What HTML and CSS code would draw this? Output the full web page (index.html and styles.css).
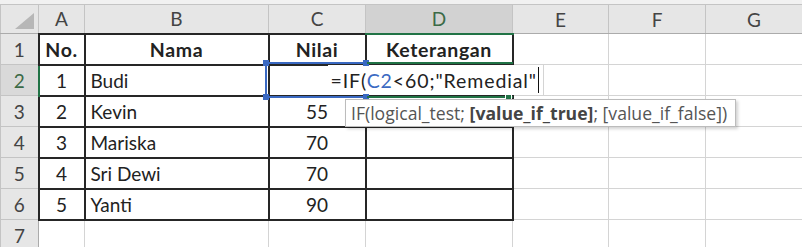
FILE: index.html
```html
<!DOCTYPE html>
<html lang="id">
<head>
    <meta charset="UTF-8">
    <title>Rumus IF</title>
    <link rel="stylesheet" href="styles.css">
</head>
<body>
    <div class="sheet">
        <table class="grid">
            <colgroup>
                <col class="w-hdr">
                <col class="w-a">
                <col class="w-b">
                <col class="w-c">
                <col class="w-d">
                <col class="w-e">
                <col class="w-f">
                <col class="w-g">
            </colgroup>
            <thead>
                <tr>
                    <th class="corner"><span class="tri"></span></th>
                    <th>A</th>
                    <th>B</th>
                    <th>C</th>
                    <th class="col-active">D</th>
                    <th>E</th>
                    <th>F</th>
                    <th>G</th>
                </tr>
            </thead>
            <tbody>
                <tr>
                    <th class="rh">1</th>
                    <td class="t mid bold">No.</td>
                    <td class="t mid bold">Nama</td>
                    <td class="t mid bold">Nilai</td>
                    <td class="t mid bold">Keterangan</td>
                    <td></td><td></td><td></td>
                </tr>
                <tr>
                    <th class="rh row-active">2</th>
                    <td class="t mid">1</td>
                    <td class="t">Budi</td>
                    <td class="t"></td>
                    <td class="t"></td>
                    <td></td><td></td><td></td>
                </tr>
                <tr>
                    <th class="rh">3</th>
                    <td class="t mid">2</td>
                    <td class="t">Kevin</td>
                    <td class="t mid">55</td>
                    <td class="t"></td>
                    <td></td><td></td><td></td>
                </tr>
                <tr>
                    <th class="rh">4</th>
                    <td class="t mid">3</td>
                    <td class="t">Mariska</td>
                    <td class="t mid">70</td>
                    <td class="t"></td>
                    <td></td><td></td><td></td>
                </tr>
                <tr>
                    <th class="rh">5</th>
                    <td class="t mid">4</td>
                    <td class="t">Sri Dewi</td>
                    <td class="t mid">70</td>
                    <td class="t"></td>
                    <td></td><td></td><td></td>
                </tr>
                <tr>
                    <th class="rh">6</th>
                    <td class="t mid">5</td>
                    <td class="t">Yanti</td>
                    <td class="t mid">90</td>
                    <td class="t"></td>
                    <td></td><td></td><td></td>
                </tr>
                <tr>
                    <th class="rh">7</th>
                    <td></td><td></td><td></td><td></td>
                    <td></td><td></td><td></td>
                </tr>
            </tbody>
        </table>

        <!-- cell being edited (D2), text spills over its neighbours -->
        <div class="editor">
            <span class="formula">=IF(<span class="ref">C2</span>&lt;60;"Remedial"</span><span class="caret"></span>
        </div>

        <!-- range referenced by the formula -->
        <div class="ref-box">
            <span class="knob tl"></span>
            <span class="knob tr"></span>
            <span class="knob bl"></span>
            <span class="knob br"></span>
        </div>

        <div class="active-cell"><span class="fill-handle"></span></div>

        <div class="tip">IF(logical_test; <b>[value_if_true]</b>; [value_if_false])</div>
    </div>
</body>
</html>
```

FILE: styles.css
```css
* {
    margin: 0;
    padding: 0;
    box-sizing: border-box;
}

body {
    background: #fff;
    font-family: 'Lato', 'Open Sans', sans-serif;
    overflow: hidden;
}

.sheet {
    position: relative;
    width: 802px;
    height: 247px;
    padding-top: 4px;
    background: linear-gradient(#f1f1f1 0 4px, #fff 4px);
}

.grid {
    border-collapse: collapse;
    table-layout: fixed;
    width: 802px;
    font-size: 19px;
    color: #222;
}

.w-hdr { width: 38px; }
.w-a { width: 46px; }
.w-b { width: 184px; }
.w-c { width: 97px; }
.w-d { width: 147px; }
.w-e { width: 96px; }
.w-f { width: 97px; }
.w-g { width: 97px; }

.grid th,
.grid td {
    border: 1px solid #d4d4d4;
    height: 31px;
    padding: 0 5px;
    white-space: nowrap;
    overflow: hidden;
    text-align: left;
}

/* column and row headers */
.grid thead th {
    height: 29px;
    background: #e6e6e6;
    border-color: #c4c4c4;
    border-bottom-color: #ababab;
    color: #444;
    font-weight: normal;
    text-align: center;
}

.grid .rh {
    background: #e6e6e6;
    border-color: #c4c4c4;
    border-right-color: #ababab;
    color: #444;
    font-weight: normal;
    text-align: center;
}

.grid thead .col-active {
    background: #d2d2d2;
    color: #3b6a47;
    border-bottom: 2px solid #217346;
}

.grid .row-active {
    background: #d9d9d9;
    color: #3b6a47;
    border-right: 2px solid #217346;
}

.corner {
    position: relative;
}

.tri {
    position: absolute;
    right: 4px;
    bottom: 4px;
    width: 19px;
    height: 16px;
    background: #b7b7b7;
    clip-path: polygon(100% 0, 100% 100%, 0 100%);
}

/* bordered data range */
.grid td.t {
    border: 2px solid #262626;
}

.mid {
    text-align: center !important;
}

.bold {
    font-weight: bold;
    font-size: 19.5px;
    letter-spacing: 0.6px;
}

/* right-aligned edit box, the formula overflows to the left */
.editor {
    position: absolute;
    left: 328px;
    top: 65px;
    width: 216px;
    height: 30px;
    display: flex;
    justify-content: flex-end;
    align-items: center;
    background: #fff;
    border-right: 1px solid #d4d4d4;
    padding-right: 4px;
    font-size: 19.5px;
    color: #222;
    white-space: nowrap;
}

.formula {
    flex-shrink: 0;
    letter-spacing: 0.9px;
}

.formula .ref {
    color: #3a69c2;
}

.caret {
    flex-shrink: 0;
    width: 1px;
    height: 26px;
    margin-left: 1px;
    background: #111;
}

/* outline only, so the formula text stays readable */
.ref-box {
    position: absolute;
    left: 265px;
    top: 62px;
    width: 101px;
    height: 36px;
    border-top: 2px solid #3a69c2;
    border-bottom: 2px solid #3a69c2;
    border-left: 2px solid #3a69c2;
}

.knob {
    position: absolute;
    width: 6px;
    height: 6px;
    background: #3a69c2;
}

.knob.tl { left: -4px; top: -4px; }
.knob.tr { right: -3px; top: -4px; }
.knob.bl { left: -4px; bottom: -4px; }
.knob.br { right: -3px; bottom: -4px; }

.active-cell {
    position: absolute;
    left: 367px;
    top: 62px;
    width: 146px;
    height: 36px;
    border-top: 2px solid #217346;
    border-bottom: 2px solid #217346;
}

.fill-handle {
    position: absolute;
    right: 1px;
    bottom: -4px;
    width: 7px;
    height: 6px;
    background: #217346;
    border: 1px solid #fff;
}

.tip {
    position: absolute;
    left: 345px;
    top: 99px;
    height: 28px;
    padding: 0 8px 0 5px;
    background: #fff;
    border: 1px solid #bcbcbc;
    box-shadow: 2px 2px 3px rgba(0, 0, 0, 0.18);
    font-family: 'Open Sans', sans-serif;
    font-size: 17.6px;
    line-height: 26px;
    color: #555;
    white-space: nowrap;
}

.tip b {
    color: #444;
}
```
